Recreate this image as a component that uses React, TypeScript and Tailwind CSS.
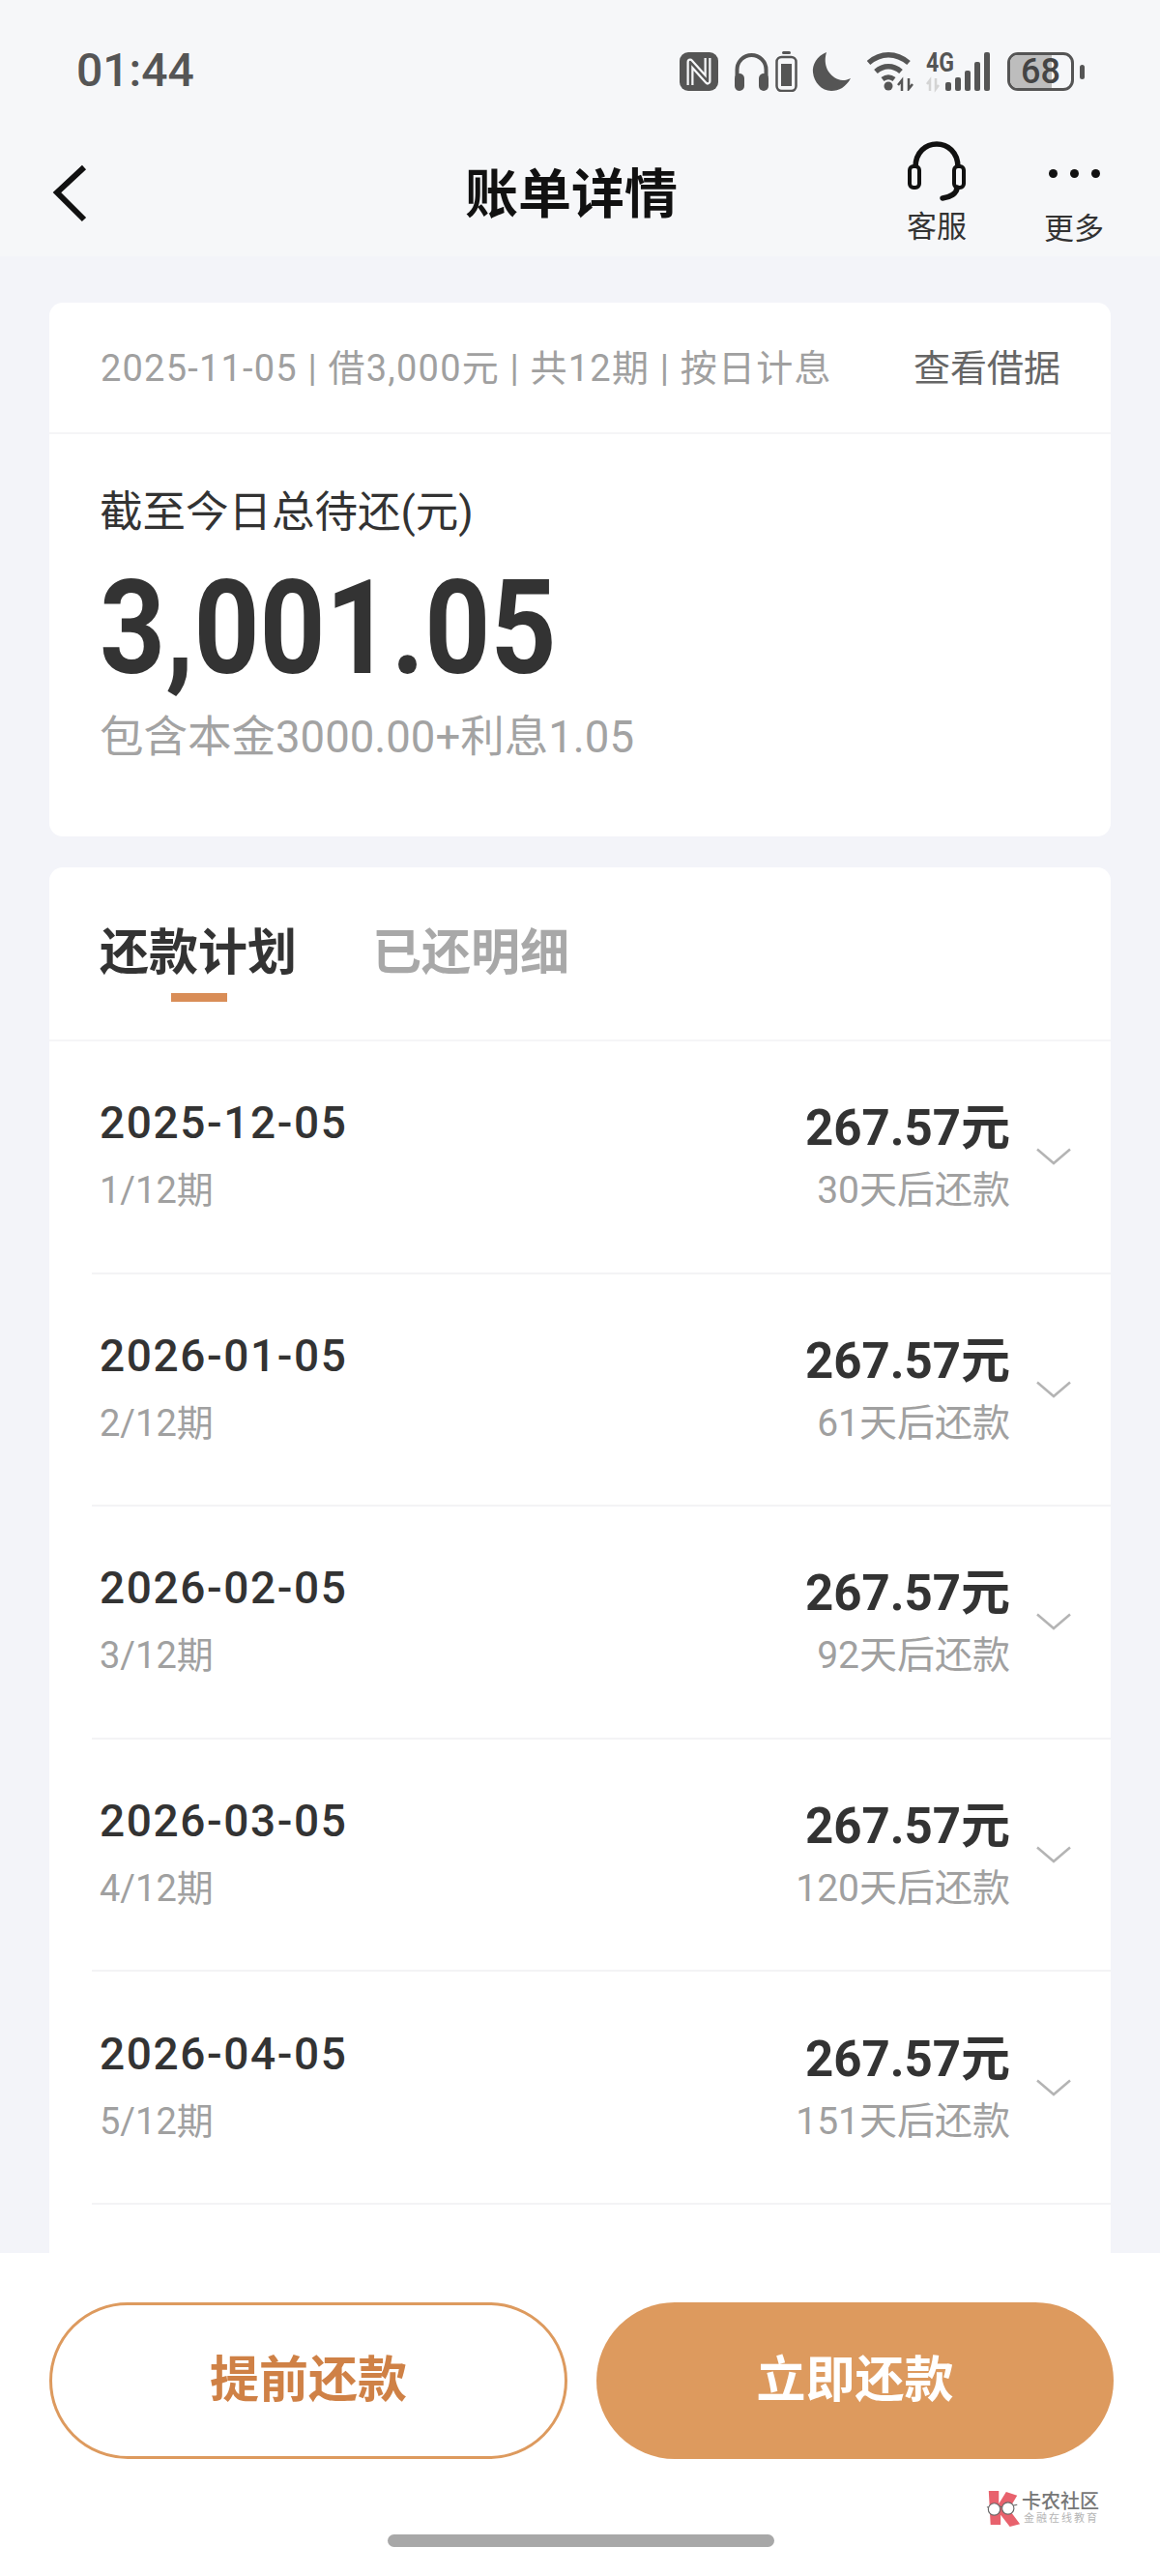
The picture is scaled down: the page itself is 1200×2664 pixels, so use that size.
const cjk = { fontFamily: 'Roboto, "Noto Sans CJK SC", sans-serif' };

const plans = [
  { date: '2025-12-05', term: '1/12期', due: '30天后还款' },
  { date: '2026-01-05', term: '2/12期', due: '61天后还款' },
  { date: '2026-02-05', term: '3/12期', due: '92天后还款' },
  { date: '2026-03-05', term: '4/12期', due: '120天后还款' },
  { date: '2026-04-05', term: '5/12期', due: '151天后还款' },
];

function StatusIcons() {
  return (
    <div className="flex items-center">
      {/* nfc */}
      <svg width="40" height="40" viewBox="0 0 40 40" className="mr-[16px]">
        <rect x="0" y="0" width="40" height="40" rx="9" fill="#555" />
        <path d="M11 34V10l18 20V6" fill="none" stroke="#f6f7f9" strokeWidth="7" strokeLinejoin="round" />
        <path d="M11 36V10l18 20V4" fill="none" stroke="#555" strokeWidth="2.5" strokeLinejoin="round" />
      </svg>
      {/* headphones */}
      <svg width="37" height="40" viewBox="0 0 37 40" className="mr-[6px]">
        <path d="M3.5 26V18a15 15 0 0 1 30 0v8" fill="none" stroke="#555" strokeWidth="4" />
        <rect x="1" y="22" width="10" height="18" rx="5" fill="#555" />
        <rect x="26" y="22" width="10" height="18" rx="5" fill="#555" />
      </svg>
      {/* small battery */}
      <svg width="23" height="42" viewBox="0 0 23 42" className="mr-[15px]">
        <rect x="7" y="0" width="9" height="3" rx="1.5" fill="#555" />
        <rect x="1.5" y="6" width="20" height="35" rx="5" fill="none" stroke="#555" strokeWidth="2.5" />
        <rect x="6" y="13" width="11" height="23" fill="#555" />
      </svg>
      {/* moon */}
      <svg width="40" height="40" viewBox="0 0 40 40" className="mr-[17px]">
        <path d="M15 0C5 4 0 13 1 21c1 10 9 19 19 19 8 0 15-4 20-13-4 2-9 3-13 1C17 24 11 13 15 0Z" fill="#555" />
      </svg>
      {/* wifi */}
      <svg width="49" height="40" viewBox="0 0 49 40" className="mr-[12px]">
        <path d="M1.5 11C14 0 30 0 43 11" fill="none" stroke="#555" strokeWidth="5.5" />
        <path d="M9 20c8-7 18-7 26 0" fill="none" stroke="#555" strokeWidth="5.5" />
        <path d="M16 28c4-3 8-3 12 0" fill="none" stroke="#555" strokeWidth="5" />
        <circle cx="22" cy="35" r="4.5" fill="#555" />
        <path d="M36 40V29l-4 5M43 27v11l4-5" fill="none" stroke="#555" strokeWidth="2.5" />
      </svg>
      {/* 4g + signal */}
      <svg width="66" height="40" viewBox="0 0 66 40" className="mr-[18px] overflow-visible">
        <text x="0" y="20" fontFamily="Roboto, sans-serif" fontWeight="700" fontSize="27" textLength="29" lengthAdjust="spacingAndGlyphs" fill="#555">4G</text>
        <path d="M4 40V29l-3 4M10 27v11l3-4" fill="none" stroke="#d4d4d4" strokeWidth="2.5" />
        <rect x="20" y="31" width="6" height="9" rx="2" fill="#555" />
        <rect x="30" y="26" width="6" height="14" rx="2" fill="#555" />
        <rect x="40" y="19" width="6" height="21" rx="2" fill="#555" />
        <rect x="50" y="10" width="6" height="30" rx="2" fill="#555" />
        <rect x="60" y="0" width="6" height="40" rx="2" fill="#555" />
      </svg>
      {/* battery */}
      <div className="relative mr-[6px] flex h-[40px] w-[69px] items-center justify-center rounded-[11px] border-[3px] border-[#555] text-[36px] font-medium text-[#444]">
        <div className="absolute inset-y-0 left-0 w-[68%] rounded-l-[8px] bg-[#bdbdbd]" />
        <span className="relative leading-none">68</span>
      </div>
      <div className="h-[15px] w-[5px] rounded-full bg-[#555]" />
    </div>
  );
}

function Headset() {
  return (
    <svg width="62" height="62" viewBox="0 0 62 62">
      <path d="M9 27C9 -5 53 -5 53 27" fill="none" stroke="#111" strokeWidth="5.5" />
      <rect x="3" y="26" width="10" height="22" rx="4" fill="none" stroke="#111" strokeWidth="4" />
      <rect x="49" y="26" width="10" height="22" rx="4" fill="none" stroke="#111" strokeWidth="4" />
      <path d="M52 48c0 6-7 10-15 11" fill="none" stroke="#111" strokeWidth="5.5" strokeLinecap="round" />
    </svg>
  );
}

function Watermark() {
  return (
    <div className="absolute right-[63px] top-[2575px] flex items-center" style={cjk}>
      <svg width="38" height="38" viewBox="0 0 38 40">
        <path d="M3 1h11v14l8-13 12 4-9 15 12 16-11 3-10-13v11H5Z" fill="#e8626d" />
        <path d="M1 19l9-2 10 2 14-3" fill="none" stroke="#666" strokeWidth="1.2" />
        <circle cx="9" cy="21" r="6.5" fill="#fff" stroke="#666" strokeWidth="1.2" />
        <circle cx="24" cy="20" r="6.5" fill="#fff" stroke="#666" strokeWidth="1.2" />
      </svg>
      <div className="flex flex-col">
        <span className="text-[20px] leading-[22px] font-medium text-[#777]">卡农社区</span>
        <span className="pl-[2px] text-[11px] leading-[14px] tracking-[2px] text-[#b5b5b5]">金融在线教育</span>
      </div>
    </div>
  );
}

export default function App() {
  return (
    <div className="relative flex h-[2664px] w-[1200px] flex-col overflow-hidden bg-[#f3f4f9]" style={cjk}>
      {/* Status bar + nav */}
      <header className="h-[265px] shrink-0 bg-[#f6f7f9]">
        <div className="flex h-[146px] items-start justify-between pl-[79px] pr-[78px] pt-[48px]">
          <span className="text-[48px] leading-[50px] font-medium text-[#555]">01:44</span>
          <div className="pt-[5px]">
            <StatusIcons />
          </div>
        </div>
        <div className="flex items-start">
          <svg width="40" height="60" viewBox="0 0 40 60" className="ml-[52px] mt-[24px]">
            <path d="M35 3 7 29l28 28" fill="none" stroke="#111" strokeWidth="6" />
          </svg>
          <h1 className="ml-[389px] mt-[22px] w-[220px] text-[55px] leading-[66px] font-bold text-[#111]">账单详情</h1>
          <div className="ml-[237px] flex w-[62px] flex-col items-center">
            <Headset />
            <span className="mt-[8px] text-[31px] leading-[38px] text-[#333]">客服</span>
          </div>
          <div className="ml-[78px] flex w-[66px] flex-col items-center">
            <div className="mt-[29px] mb-[31px] flex h-[9px] gap-[13px]">
              <span className="h-[9px] w-[9px] rounded-full bg-[#111]" />
              <span className="h-[9px] w-[9px] rounded-full bg-[#111]" />
              <span className="h-[9px] w-[9px] rounded-full bg-[#111]" />
            </div>
            <span className="mt-[3px] text-[31px] leading-[38px] text-[#333]">更多</span>
          </div>
        </div>
      </header>

      <main className="flex min-h-0 flex-1 flex-col gap-[32px] overflow-hidden px-[51px] pt-[48px]">
        {/* Summary card */}
        <section className="h-[552px] shrink-0 rounded-[14px] bg-white">
          <div className="flex h-[136px] items-center justify-between border-b-2 border-[#f5f5f7] pl-[53px] pr-[52px] pt-[3px] text-[38px]">
            <span className="tracking-[1.2px] text-[#a0a0a0]">2025-11-05 | 借3,000元 | 共12期 | 按日计息</span>
            <span className="text-[#666]">查看借据</span>
          </div>
          <div className="pl-[52px] pt-[55px]">
            <div className="text-[44.5px] leading-[52px] text-[#333]">截至今日总待还(元)</div>
            <div className="mt-[19px] origin-left scale-x-[0.88] text-[135px] leading-[150px] font-bold text-[#333]">3,001.05</div>
            <div className="mt-[11px] text-[45.5px] leading-[54px] text-[#a3a3a3]">包含本金3000.00+利息1.05</div>
          </div>
        </section>

        {/* Repayment plan */}
        <section className="min-h-0 flex-1 rounded-t-[14px] bg-white">
          <div className="relative flex h-[180px] gap-[78px] border-b-2 border-[#f5f5f7] pl-[52px] pt-[54px] text-[51px] leading-[70px] font-bold">
            <span className="text-[#333]">还款计划</span>
            <span className="text-[#a8a8a8]">已还明细</span>
            <span className="absolute left-[126px] top-[130px] h-[9px] w-[58px] bg-[#d98d57]" />
          </div>
          {plans.map((plan) => (
            <div key={plan.date} className="ml-[44px] flex h-[240.6px] items-center border-b-2 border-[#f3f3f5] pl-[8px]">
              <div className="flex-1">
                <div className="-mt-[6px] text-[46px] leading-[60px] tracking-[1.6px] text-[#333]" style={{ fontWeight: 500 }}>{plan.date}</div>
                <div className="mt-[16px] text-[38px] leading-[48px] text-[#a0a0a0]">{plan.term}</div>
              </div>
              <div className="flex flex-col items-end">
                <div className="text-[51px] leading-[60px] font-bold text-[#333]">267.57元</div>
                <div className="mt-[10px] text-[39px] leading-[48px] text-[#a0a0a0]">{plan.due}</div>
              </div>
              <svg width="36" height="18" viewBox="0 0 36 18" className="ml-[27px] mr-[41px]">
                <path d="M1 1.5 18 16 35 1.5" fill="none" stroke="#b4b4b4" strokeWidth="2.5" />
              </svg>
            </div>
          ))}
        </section>
      </main>

      {/* Bottom actions */}
      <footer className="h-[334px] shrink-0 bg-white pl-[51px] pr-[48px] pt-[51px]">
        <div className="flex gap-[30px]">
          <button className="h-[162px] w-[536px] rounded-[81px] border-[3px] border-[#dd9a5e] bg-white text-[51px] font-bold text-[#cf8146]">提前还款</button>
          <button className="h-[162px] w-[535px] rounded-[81px] bg-[#dd9a5e] text-[51px] font-bold text-white">立即还款</button>
        </div>
        <div className="mx-auto mt-[78px] h-[13px] w-[400px] -translate-x-[1px] rounded-full bg-[#a8a8a8]" />
      </footer>

      <Watermark />
    </div>
  );
}
